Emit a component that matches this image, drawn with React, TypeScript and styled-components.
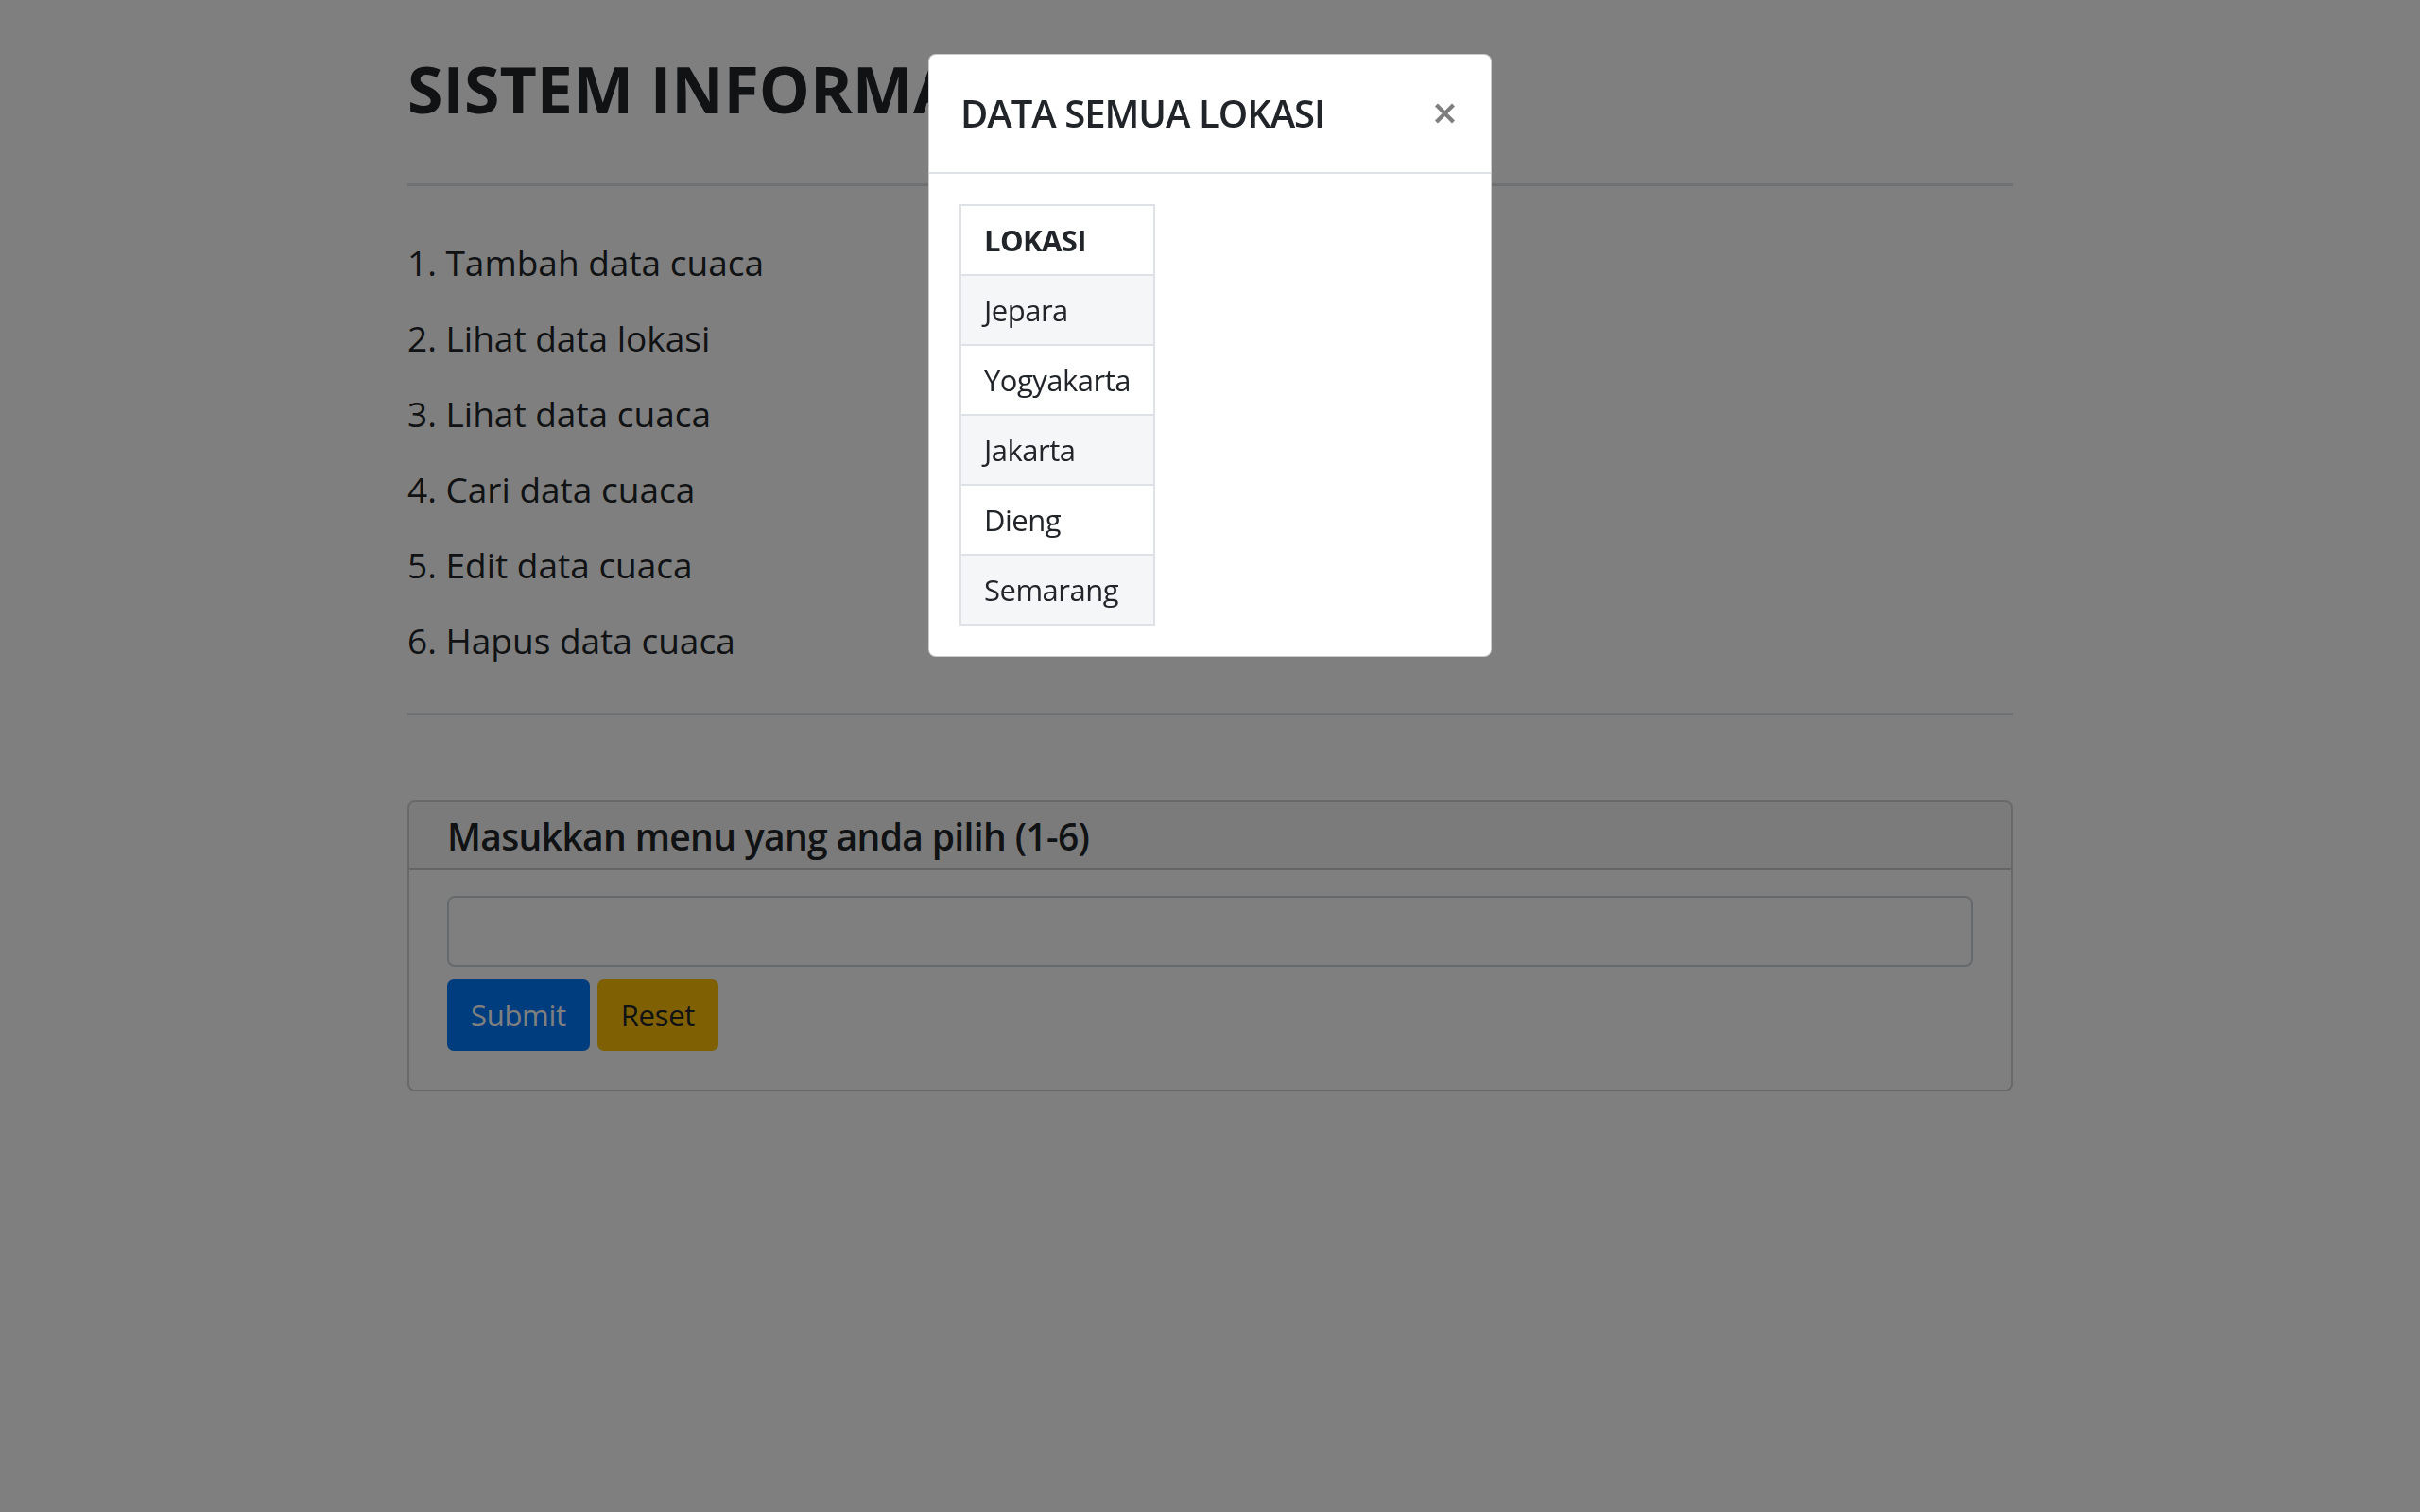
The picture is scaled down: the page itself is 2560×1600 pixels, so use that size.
import React from "react";
import styled, { createGlobalStyle } from "styled-components";

const GlobalStyle = createGlobalStyle`
  html, body {
    margin: 0;
    padding: 0;
    background: #ffffff;
  }
  body {
    font-family: "Open Sans", "Noto Sans", sans-serif;
    color: #212529;
  }
  * { box-sizing: border-box; }
`;

const Container = styled.main`
  width: 1698px;
  margin: 0 auto;
  padding-top: 53px;
`;

const Title = styled.h1`
  margin: 0;
  font-size: 68px;
  line-height: 82px;
  font-weight: 700;
  color: #212529;
`;

const Divider = styled.hr<{ $gap: number }>`
  margin: ${(p) => p.$gap}px 0 0;
  height: 3px;
  border: 0;
  background: #dde0e4;
`;

const MenuList = styled.div`
  margin-top: 53px;
  display: flex;
  flex-direction: column;
  gap: 24px;
`;

const MenuItem = styled.p`
  margin: 0;
  font-size: 37px;
  line-height: 56px;
  color: #212529;
`;

const Card = styled.section`
  margin-top: 90px;
  border: 2px solid rgba(0, 0, 0, 0.175);
  border-radius: 8px;
  overflow: hidden;
`;

const CardHeader = styled.h4`
  margin: 0;
  padding: 10px 40px 8px;
  font-size: 39px;
  line-height: 52px;
  font-weight: 600;
  letter-spacing: -0.65px;
  background: rgba(0, 0, 0, 0.03);
  border-bottom: 2px solid rgba(0, 0, 0, 0.175);
`;

const CardBody = styled.form`
  padding: 27px 40px 41px;
  display: flex;
  flex-direction: column;
  gap: 13px;
`;

const TextInput = styled.input`
  display: block;
  width: 100%;
  height: 75px;
  border: 2px solid #ced4da;
  border-radius: 8px;
  background: #fff;
  font: inherit;
  font-size: 31px;
  padding: 0 20px;
`;

const ButtonRow = styled.div`
  display: flex;
  gap: 8px;
`;

const Button = styled.button<{ $variant: "primary" | "warning" }>`
  height: 76px;
  padding: 0 25px;
  border: 0;
  border-radius: 7px;
  font-family: inherit;
  font-size: 31px;
  letter-spacing: -0.3px;
  display: inline-flex;
  align-items: center;
  justify-content: center;
  background: ${(p) => (p.$variant === "primary" ? "#007bff" : "#ffc107")};
  color: ${(p) => (p.$variant === "primary" ? "#ffffff" : "#212529")};
`;

const Backdrop = styled.div`
  position: fixed;
  inset: 0;
  background: rgba(0, 0, 0, 0.5);
  z-index: 1040;
`;

const Modal = styled.div`
  position: fixed;
  top: 57px;
  left: 982px;
  width: 596px;
  background: #ffffff;
  border: 1px solid rgba(0, 0, 0, 0.2);
  border-radius: 8px;
  z-index: 1050;
  overflow: hidden;
`;

const ModalHeader = styled.div`
  display: flex;
  align-items: center;
  justify-content: space-between;
  padding: 33px 37px 33px 33px;
  border-bottom: 2px solid #dee2e6;
`;

const ModalTitle = styled.h5`
  margin: 0;
  font-size: 40px;
  line-height: 58px;
  font-weight: 600;
  letter-spacing: -1px;
  color: #212529;
`;

const CloseButton = styled.button`
  border: 0;
  background: transparent;
  padding: 0;
  width: 23px;
  height: 22px;
  display: flex;
  align-items: center;
  justify-content: center;
  color: #000;
  opacity: 0.5;
  cursor: pointer;
`;

const ModalBody = styled.div`
  padding: 32px;
`;

const Table = styled.table`
  width: 205px;
  border-collapse: collapse;
`;

const HeadCell = styled.th`
  text-align: left;
  font-size: 31px;
  font-weight: 700;
  letter-spacing: -0.6px;
  line-height: 48px;
  padding: 12px 24px;
  border: 2px solid #dee2e6;
  color: #212529;
`;

const Row = styled.tr<{ $striped: boolean }>`
  background: ${(p) => (p.$striped ? "#f5f6f8" : "#ffffff")};
`;

const Cell = styled.td`
  font-size: 31px;
  letter-spacing: -0.5px;
  line-height: 48px;
  padding: 12px 24px;
  border: 2px solid #dee2e6;
  color: #212529;
  white-space: nowrap;
`;

const menu = [
  "1. Tambah data cuaca",
  "2. Lihat data lokasi",
  "3. Lihat data cuaca",
  "4. Cari data cuaca",
  "5. Edit data cuaca",
  "6. Hapus data cuaca",
];

const lokasi = ["Jepara", "Yogyakarta", "Jakarta", "Dieng", "Semarang"];

export default function App() {
  return (
    <>
      <GlobalStyle />
      <Container>
        <Title>SISTEM INFORMASI CUACA</Title>
        <Divider $gap={59} />
        <MenuList>
          {menu.map((m) => (
            <MenuItem key={m}>{m}</MenuItem>
          ))}
        </MenuList>
        <Divider $gap={48} />
        <Card>
          <CardHeader>Masukkan menu yang anda pilih (1-6)</CardHeader>
          <CardBody onSubmit={(e) => e.preventDefault()}>
            <TextInput type="text" />
            <ButtonRow>
              <Button type="submit" $variant="primary">
                Submit
              </Button>
              <Button type="reset" $variant="warning">
                Reset
              </Button>
            </ButtonRow>
          </CardBody>
        </Card>
      </Container>
      <Backdrop />
      <Modal role="dialog">
        <ModalHeader>
          <ModalTitle>DATA SEMUA LOKASI</ModalTitle>
          <CloseButton aria-label="Close">
            <svg width="23" height="22" viewBox="0 0 23 22">
              <path
                d="M2.5 2 L20.5 20 M20.5 2 L2.5 20"
                stroke="currentColor"
                strokeWidth="4.2"
                fill="none"
              />
            </svg>
          </CloseButton>
        </ModalHeader>
        <ModalBody>
          <Table>
            <thead>
              <tr>
                <HeadCell>LOKASI</HeadCell>
              </tr>
            </thead>
            <tbody>
              {lokasi.map((l, i) => (
                <Row key={l} $striped={i % 2 === 0}>
                  <Cell>{l}</Cell>
                </Row>
              ))}
            </tbody>
          </Table>
        </ModalBody>
      </Modal>
    </>
  );
}
